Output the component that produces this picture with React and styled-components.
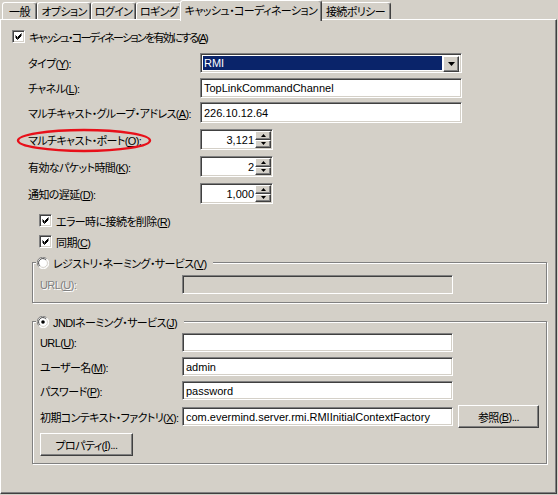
import React from 'react';
import styled, { createGlobalStyle } from 'styled-components';

const GlobalStyle = createGlobalStyle`
    html, body {
        margin: 0;
        padding: 0;
        background: #d4d0c8;
    }
    body {
        font-family: "Liberation Sans", "Noto Sans CJK JP", sans-serif;
        font-size: 11px;
        letter-spacing: -0.6px;
        color: #000;
        font-feature-settings: "palt";
    }
    u {
        text-decoration-thickness: 1px;
        text-underline-offset: 1px;
    }
`;

const Window = styled.div`
    width: 558px;
    height: 495px;
    background: #d4d0c8;
    display: flex;
    flex-direction: column;
    overflow: hidden;
`;

const TabBar = styled.div`
    display: flex;
    align-items: flex-end;
    height: 20px;
    padding-left: 2px;
    position: relative;
    z-index: 1;
`;

const Tab = styled.div`
    box-sizing: border-box;
    width: ${p => p.$w}px;
    height: ${p => (p.$active ? 21 : 17)}px;
    margin: ${p => (p.$active ? '0 -2px -1px -2px' : '0 0 1px 0')};
    padding-bottom: ${p => (p.$active ? 3 : 0)}px;
    border: 1px solid;
    border-bottom: none;
    border-color: #fff #404040 transparent #fff;
    border-radius: 3px 3px 0 0;
    box-shadow: inset -1px 0 #808080;
    background: #d4d0c8;
    display: flex;
    align-items: center;
    justify-content: center;
    white-space: nowrap;
    position: relative;
    z-index: ${p => (p.$active ? 2 : 1)};
`;

const Panel = styled.div`
    box-sizing: border-box;
    width: 557px;
    flex: 1;
    margin-top: -1px;
    margin-bottom: 1px;
    padding: 9px 0 0 11px;
    border: 1px solid;
    border-color: #fff #404040 #404040 #fff;
    box-shadow: inset -1px -1px #808080;
    display: flex;
    flex-direction: column;
`;

const CheckRow = styled.label`
    display: flex;
    align-items: center;
    gap: 4px;
    height: 15px;
    margin-left: ${p => p.$indent || 0}px;
    margin-top: ${p => p.$mt || 0}px;
    white-space: nowrap;
    letter-spacing: ${p => (p.$tight ? '-1.7px' : 'inherit')};
`;

const Sunken = styled.div`
    box-sizing: border-box;
    border: 1px solid;
    border-color: #808080 #fff #fff #808080;
    box-shadow: inset 1px 1px #404040, inset -1px -1px #d4d0c8;
`;

const CheckBox = styled(Sunken)`
    width: 13px;
    height: 13px;
    background: #fff;
    display: flex;
    align-items: center;
    justify-content: center;
    flex: none;
`;

const FormRow = styled.div`
    display: flex;
    align-items: center;
    height: ${p => p.$h || 20}px;
    margin-top: ${p => p.$mt || 0}px;
    margin-left: ${p => p.$indent || 0}px;
`;

const Label = styled.span`
    width: ${p => p.$w}px;
    flex: none;
    white-space: nowrap;
    position: relative;
    color: ${p => (p.$disabled ? '#808080' : '#000')};
    text-shadow: ${p => (p.$disabled ? '1px 1px 0 #fff' : 'none')};
`;

const Marked = styled.span`
    position: relative;
    display: inline-block;
`;

const Ellipse = styled.svg`
    position: absolute;
    left: -12px;
    top: -4px;
    pointer-events: none;
`;

const TextBox = styled(Sunken)`
    width: ${p => p.$w}px;
    height: ${p => p.$h || 20}px;
    background: ${p => (p.$disabled ? '#d4d0c8' : '#fff')};
    padding: 0 3px;
    display: flex;
    align-items: center;
    white-space: nowrap;
    overflow: hidden;
    letter-spacing: 0;
`;

const Select = styled(Sunken)`
    width: 262px;
    height: 20px;
    background: #fff;
    padding: 2px;
    display: flex;
    gap: 1px;
    letter-spacing: 0;
`;

const SelectValue = styled.div`
    flex: 1;
    background: #0a246a;
    color: #fff;
    padding-left: 1px;
    display: flex;
    align-items: center;
`;

const Raised = styled.div`
    box-sizing: border-box;
    border: 1px solid;
    border-color: #fff #404040 #404040 #fff;
    box-shadow: inset -1px -1px #808080;
    background: #d4d0c8;
    display: flex;
    align-items: center;
    justify-content: center;
`;

const DropButton = styled(Raised)`
    width: 16px;
    height: 16px;
    flex: none;
`;

const Spinner = styled(Sunken)`
    width: 73px;
    height: 21px;
    background: #fff;
    display: flex;
    letter-spacing: 0;
`;

const SpinValue = styled.div`
    flex: 1;
    display: flex;
    align-items: center;
    justify-content: flex-end;
    padding-right: 1px;
`;

const SpinButtons = styled.div`
    width: 16px;
    display: flex;
    flex-direction: column;
    padding: 1px 1px 1px 0;
`;

const SpinButton = styled(Raised)`
    flex: 1;
`;

const Group = styled.fieldset`
    box-sizing: border-box;
    width: 515px;
    margin: ${p => p.$mt || 0}px 0 0 20px;
    padding: 0 0 ${p => p.$pb || 7}px 7px;
    border: 1px solid #808080;
    box-shadow: 1px 1px 0 #fff, inset 1px 1px 0 #fff;
    min-width: 0;
`;

const Legend = styled.legend`
    display: flex;
    align-items: center;
    gap: 4px;
    height: 15px;
    margin-left: -4px;
    padding: 0 7px 0 1px;
    background: #d4d0c8;
    white-space: nowrap;
`;

const Button = styled(Raised)`
    width: ${p => p.$w}px;
    height: 23px;
    margin-left: ${p => p.$ml || 0}px;
    flex: none;
    white-space: nowrap;
`;

const Radio = ({ checked }) => (
    <svg width="12" height="12" viewBox="0 0 12 12">
        <circle cx="6" cy="6" r="5.5" fill="#fff" />
        <path d="M1.8 9.6 A5 5 0 0 1 9.6 1.8" stroke="#808080" strokeWidth="1" fill="none" />
        <path d="M2.8 8.8 A4 4 0 0 1 8.8 2.8" stroke="#404040" strokeWidth="1" fill="none" />
        <path d="M10.2 2.4 A5 5 0 0 1 2.4 10.2" stroke="#fff" strokeWidth="1" fill="none" />
        <path d="M9.2 3.2 A4 4 0 0 1 3.2 9.2" stroke="#d4d0c8" strokeWidth="1" fill="none" />
        {checked && <circle cx="6" cy="6" r="1.8" fill="#000" />}
    </svg>
);

const Check = () => (
    <CheckBox>
        <svg width="7" height="7" viewBox="0 0 7 7">
            <path d="M0.5 2.5 L2.5 4.5 L6.5 0.5 M0.5 3.5 L2.5 5.5 L6.5 1.5 M0.5 4.5 L2.5 6.5 L6.5 2.5" stroke="#000" strokeWidth="1" fill="none" />
        </svg>
    </CheckBox>
);

const Arrow = ({ up, w = 5, h = 3 }) => (
    <svg width={w} height={h} viewBox={`0 0 ${w} ${h}`}>
        <path d={up ? `M0 ${h} L${w / 2} 0 L${w} ${h}Z` : `M0 0 L${w / 2} ${h} L${w} 0Z`} fill="#000" />
    </svg>
);

const Spin = ({ value }) => (
    <Spinner>
        <SpinValue>{value}</SpinValue>
        <SpinButtons>
            <SpinButton><Arrow up /></SpinButton>
            <SpinButton><Arrow /></SpinButton>
        </SpinButtons>
    </Spinner>
);

const tabs = [
    { label: '一般', w: 35 },
    { label: 'オプション', w: 54 },
    { label: 'ログイン', w: 45 },
    { label: 'ロギング', w: 46 },
    { label: 'キャッシュ・コーディネーション', w: 142, active: true },
    { label: '接続ポリシー', w: 71 },
];

export default function App() {
    return (
        <>
            <GlobalStyle />
            <Window>
                <TabBar>
                    {tabs.map(t => (
                        <Tab key={t.label} $w={t.w} $active={t.active}>{t.label}</Tab>
                    ))}
                </TabBar>
                <Panel>
                    <CheckRow $tight>
                        <Check />
                        <span>キャッシュ・コーディネーションを有効にする(<u>A</u>)</span>
                    </CheckRow>

                    <FormRow $mt={9} $indent={16}>
                        <Label $w={172}>タイプ(<u>Y</u>):</Label>
                        <Select>
                            <SelectValue>RMI</SelectValue>
                            <DropButton><Arrow w={7} h={4} /></DropButton>
                        </Select>
                    </FormRow>
                    <FormRow $mt={5} $indent={16}>
                        <Label $w={172}>チャネル(<u>L</u>):</Label>
                        <TextBox $w={262}>TopLinkCommandChannel</TextBox>
                    </FormRow>
                    <FormRow $mt={4} $h={21} $indent={16}>
                        <Label $w={172}>マルチキャスト・グループ・アドレス(<u>A</u>):</Label>
                        <TextBox $w={262} $h={21}>226.10.12.64</TextBox>
                    </FormRow>
                    <FormRow $mt={6} $h={21} $indent={16}>
                        <Label $w={172}>
                            <Marked>
                                マルチキャスト・ポート(<u>O</u>):
                                <Ellipse width="136" height="25" viewBox="0 0 136 25">
                                    <ellipse cx="68" cy="12.5" rx="66" ry="10.5" fill="none" stroke="#e8101a" strokeWidth="2.4" />
                                </Ellipse>
                            </Marked>
                        </Label>
                        <Spin value="3,121" />
                    </FormRow>
                    <FormRow $mt={6} $h={21} $indent={16}>
                        <Label $w={172}>有効なパケット時間(<u>K</u>):</Label>
                        <Spin value="2" />
                    </FormRow>
                    <FormRow $mt={6} $h={21} $indent={16}>
                        <Label $w={172}>通知の遅延(<u>D</u>):</Label>
                        <Spin value="1,000" />
                    </FormRow>

                    <CheckRow $mt={9} $indent={27}>
                        <Check />
                        <span>エラー時に接続を削除(<u>R</u>)</span>
                    </CheckRow>
                    <CheckRow $mt={6} $indent={27}>
                        <Check />
                        <span>同期(<u>C</u>)</span>
                    </CheckRow>

                    <Group $mt={6} $pb={8}>
                        <Legend>
                            <Radio />
                            <span>レジストリ・ネーミング・サービス(<u>V</u>)</span>
                        </Legend>
                        <FormRow $mt={5} $h={19}>
                            <Label $w={142} $disabled>URL(<u>U</u>):</Label>
                            <TextBox $w={271} $h={19} $disabled />
                        </FormRow>
                    </Group>

                    <Group $mt={11} $pb={7}>
                        <Legend>
                            <Radio checked />
                            <span>JNDIネーミング・サービス(<u>J</u>)</span>
                        </Legend>
                        <FormRow $mt={4} $h={19}>
                            <Label $w={142}>URL(<u>U</u>):</Label>
                            <TextBox $w={271} $h={19} />
                        </FormRow>
                        <FormRow $mt={5} $h={19}>
                            <Label $w={142}>ユーザー名(<u>M</u>):</Label>
                            <TextBox $w={271} $h={19}>admin</TextBox>
                        </FormRow>
                        <FormRow $mt={5} $h={19}>
                            <Label $w={142}>パスワード(<u>P</u>):</Label>
                            <TextBox $w={271} $h={19}>password</TextBox>
                        </FormRow>
                        <FormRow $mt={5} $h={23}>
                            <Label $w={142}>初期コンテキスト・ファクトリ(<u>X</u>):</Label>
                            <TextBox $w={271} $h={19}>com.evermind.server.rmi.RMIInitialContextFactory</TextBox>
                            <Button $w={81} $ml={5}>参照(<u>B</u>)...</Button>
                        </FormRow>
                        <FormRow $mt={5} $h={23}>
                            <Button $w={93}>プロパティ(<u>I</u>)...</Button>
                        </FormRow>
                    </Group>
                </Panel>
            </Window>
        </>
    );
}
